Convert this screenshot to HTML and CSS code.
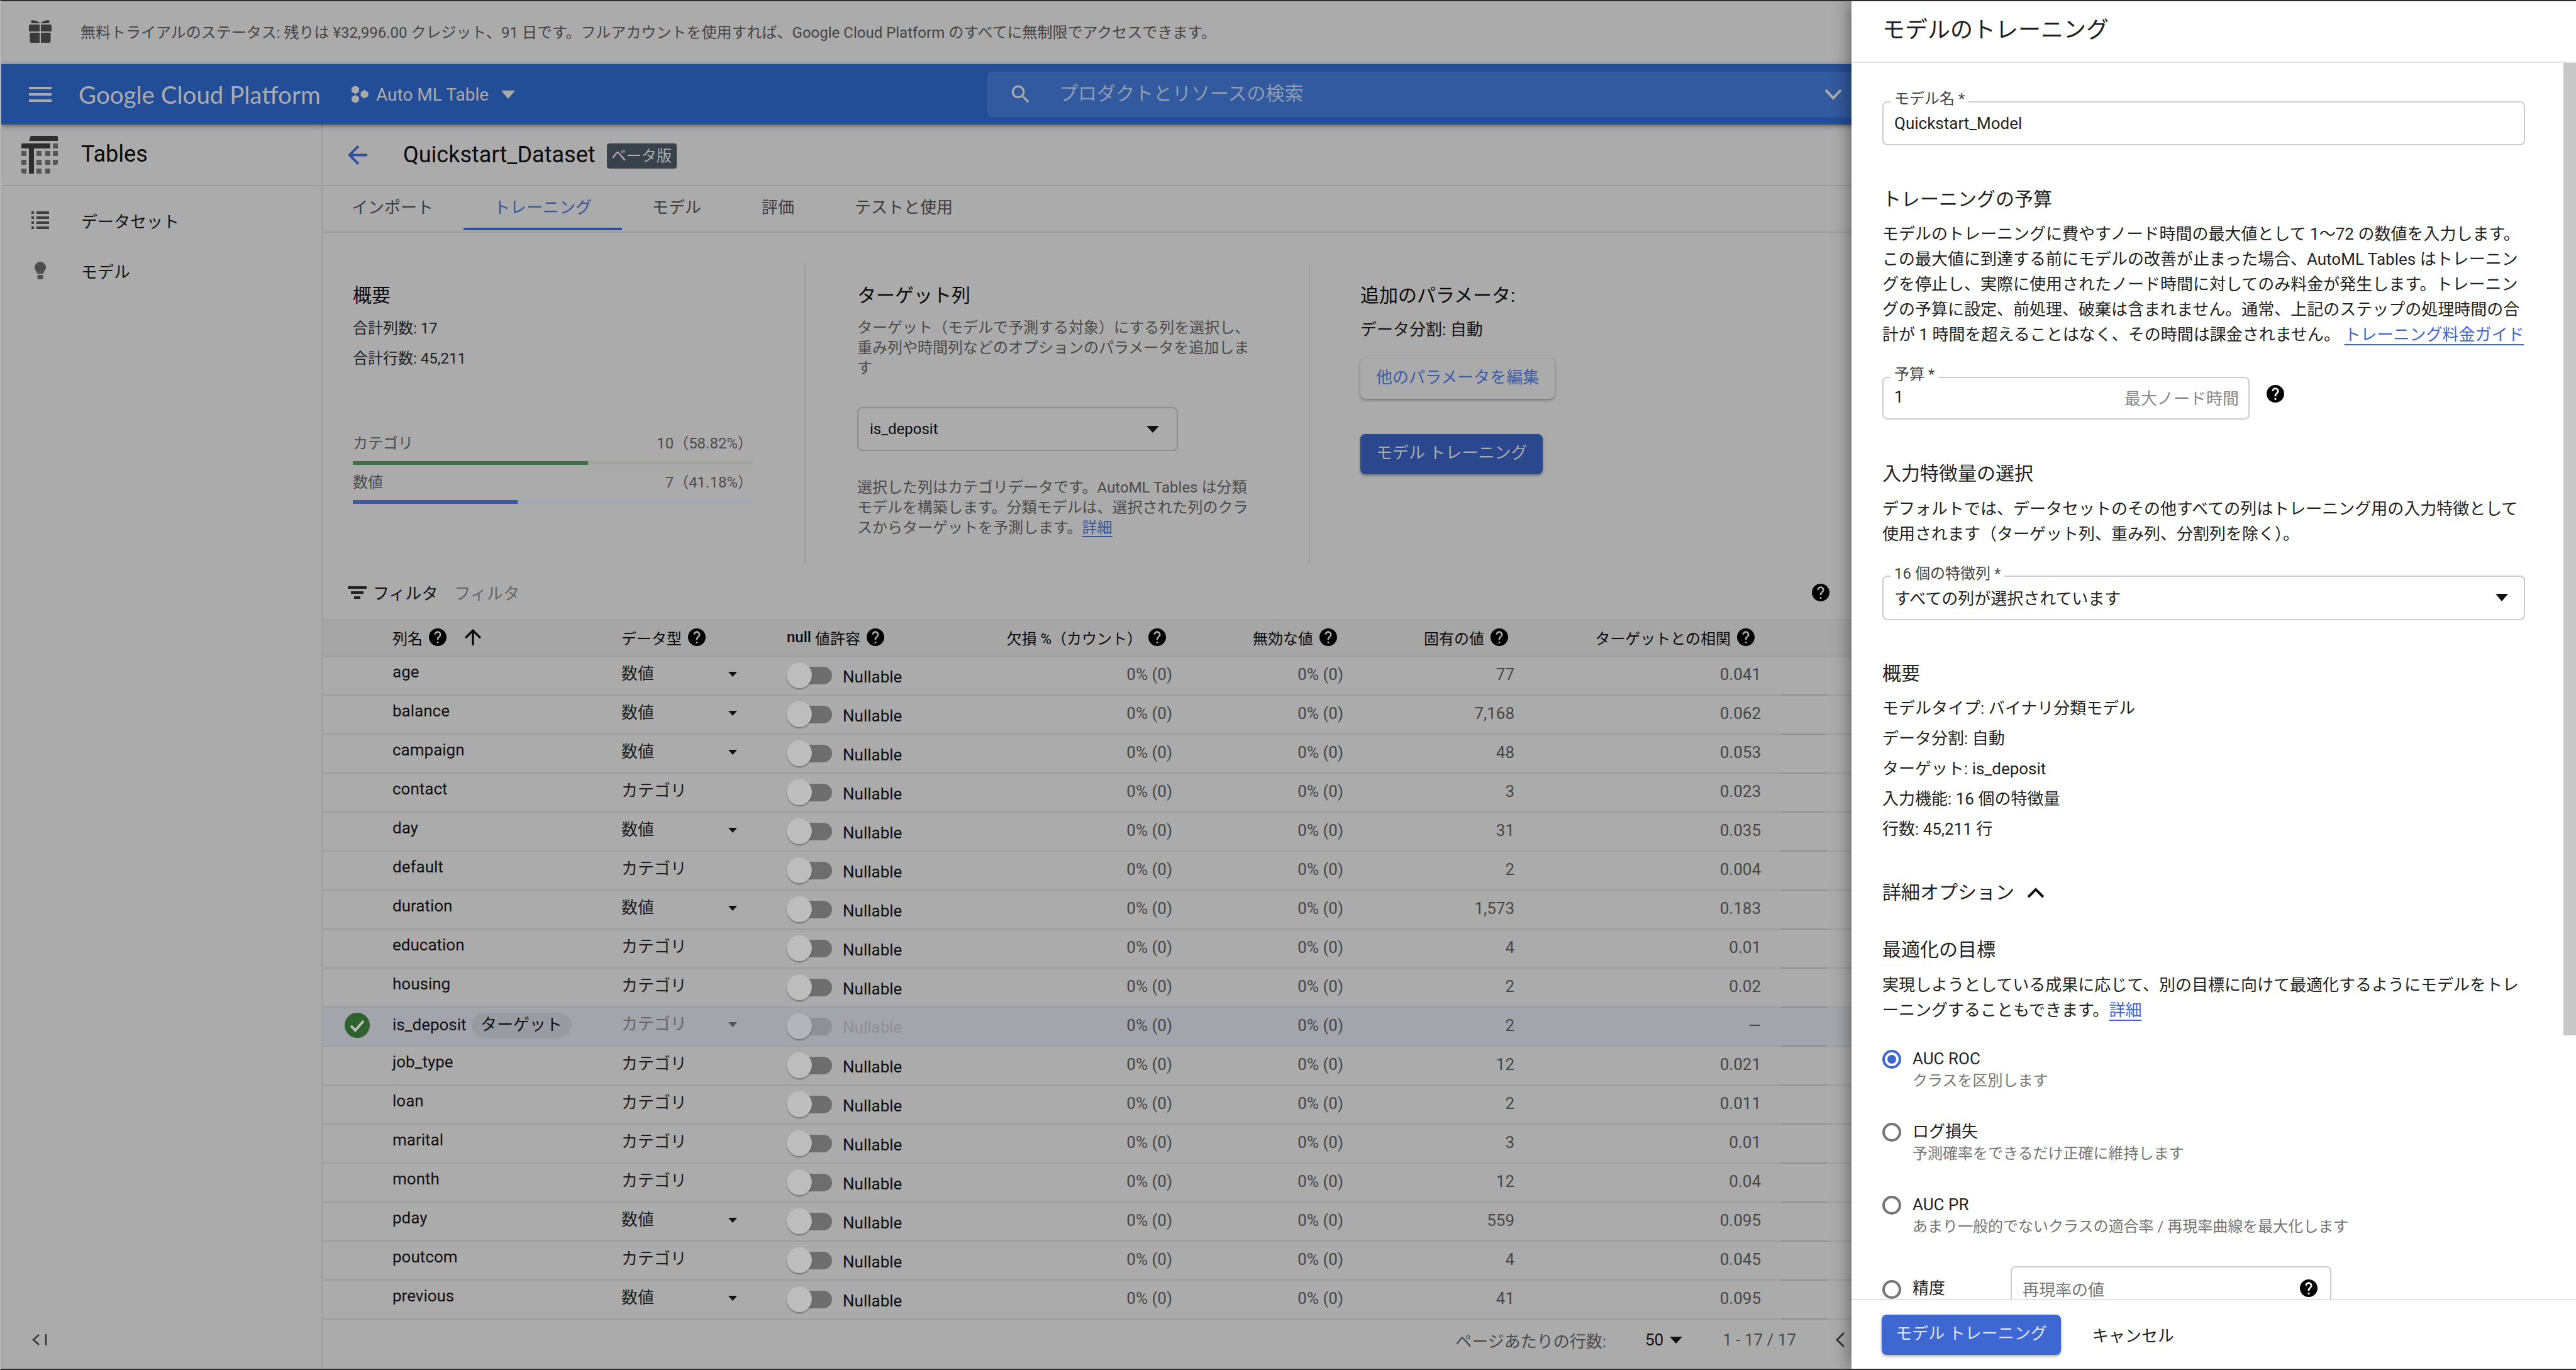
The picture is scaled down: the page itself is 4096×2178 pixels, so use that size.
FILE: index.html
```html
<!DOCTYPE html>
<html lang="ja">
<head>
<meta charset="utf-8">
<title>Google Cloud Platform - Tables</title>
<link rel="stylesheet" href="styles.css">
</head>
<body>
<svg class="defs" width="0" height="0">
  <symbol id="help" viewBox="2 2 20 20"><path d="M12 2C6.48 2 2 6.48 2 12s4.48 10 10 10 10-4.48 10-10S17.52 2 12 2zm1 17h-2v-2h2v2zm2.07-7.75l-.9.92C13.45 12.9 13 13.5 13 15h-2v-.5c0-1.1.45-2.1 1.17-2.83l1.24-1.26c.37-.36.59-.86.59-1.41 0-1.1-.9-2-2-2s-2 .9-2 2H8c0-2.21 1.79-4 4-4s4 1.79 4 4c0 .88-.36 1.68-.93 2.25z"/></symbol>
</svg>
<div class="app">
  <div class="trial">
    <svg class="gift" viewBox="0 0 36 36"><path d="M3 1.5C6 .2 11 .8 16.5 4.5c1 .7 2 .7 3 0C25 .8 30 .2 33 1.5c-.3 2.5-.8 3.5-3 4H6c-2.200-.5-2.700-1.500-3-4z" transform="translate(0 -.5)"/><path d="M2 7h15v11H0V9a2 2 0 0 1 2-2zM19 7h15a2 2 0 0 1 2 2v9H19zM1.500 20H17v16H4a2.500 2.500 0 0 1-2.500-2.500zM19 20h15.500v13.500A2.500 2.500 0 0 1 32 36H19z"/></svg>
    <span>無料トライアルのステータス: 残りは ¥32,996.00 クレジット、91 日です。フルアカウントを使用すれば、Google Cloud Platform のすべてに無制限でアクセスできます。</span>
  </div>
  <header class="topbar">
    <svg class="burger" viewBox="0 0 36 24"><path d="M0 0h36v4H0zM0 10h36v4H0zM0 20h36v4H0z"/></svg>
    <span class="logo">Google Cloud Platform</span>
    <div class="project">
      <svg class="hex" viewBox="0 0 27 28"><path d="M6 0l6 3.500v6.500l-6 3.500-6-3.500V3.500zM20.500 7l6 3.500v6.500l-6 3.500-6-3.500v-6.500zM6 15l6 3.500v6l-6 3.500-6-3.500v-6z"/></svg>
      <span>Auto ML Table</span>
      <i class="project-caret"></i>
    </div>
    <div class="search">
      <svg class="search-icon" viewBox="0 0 24 24"><path d="M15.500 14h-.79l-.28-.27C15.410 12.590 16 11.110 16 9.500 16 5.910 13.090 3 9.500 3S3 5.910 3 9.500 5.910 16 9.500 16c1.610 0 3.090-.59 4.230-1.570l.27.28v.79l5 4.990L20.490 19l-4.990-5zm-6 0C7.010 14 5 11.990 5 9.500S7.010 5 9.500 5 14 7.010 14 9.500 11.990 14 9.500 14z"/></svg>
      <span class="search-text">プロダクトとリソースの検索</span>
      <svg class="search-chevron" viewBox="0 0 28 18"><path d="M2 2l12 13L26 2" /></svg>
    </div>
  </header>
  <div class="body">
    <aside class="sidebar">
      <div class="side-head">
        <svg class="tables-icon" viewBox="0 0 58 60">
          <path class="t-dark" d="M14 2a2 2 0 0 1 2-2h40a2 2 0 0 1 2 2v6H12zM2 12h44v8H20v40h-8V20H0v-6a2 2 0 0 1 2-2z"/>
          <path class="t-mid" d="M50 12h8v8h-8zM0 24h8v8H0zM24 24h8v8h-8zM38 24h8v8h-8zM50 24h8v8h-8zM0 38h8v8H0zM24 38h8v8h-8zM38 38h8v8h-8zM50 38h8v6l-2 2h-6zM0 52h8v8H2l-2-2zM24 52h8v8h-8zM38 52h8v6l-2 2h-6z"/>
        </svg>
        <span>Tables</span>
      </div>
      <nav class="side-nav">
        <div class="side-item">
          <span class="side-ico"><svg class="list-icon" viewBox="0 0 28 28"><path d="M0 0h4v4H0zM8 0h20v4H8zM0 8h4v4H0zM8 8h20v4H8zM0 16h4v4H0zM8 16h20v4H8zM0 24h4v4H0zM8 24h20v4H8z"/></svg></span>
          <span>データセット</span>
        </div>
        <div class="side-item">
          <span class="side-ico"><svg class="bulb-icon" viewBox="0 0 18 28"><path d="M9 0a9 9 0 0 1 9 9c0 3.300-1.500 5.300-3.500 7.300V19h-11v-2.700C1.500 14.300 0 12.300 0 9a9 9 0 0 1 9-9z"/><rect x="4.500" y="21" width="9" height="7" rx="2"/></svg></span>
          <span>モデル</span>
        </div>
      </nav>
      <svg class="collapse" viewBox="0 0 26 20"><path d="M12 2L3 10l9 8M23 1v18"/></svg>
    </aside>
    <main class="main">
      <div class="title-row">
        <svg class="back" viewBox="4 4 16 16"><path d="M20 11H7.830l5.590-5.590L12 4l-8 8 8 8 1.410-1.410L7.830 13H20v-2z"/></svg>
        <h1>Quickstart_Dataset</h1>
        <span class="badge">ベータ版</span>
      </div>
      <div class="tabs">
        <span class="tab">インポート</span>
        <span class="tab active">トレーニング</span>
        <span class="tab">モデル</span>
        <span class="tab">評価</span>
        <span class="tab">テストと使用</span>
      </div>
      <section class="summary">
        <div class="col col-a">
          <h3 class="col-title">概要</h3>
          <p class="meta first">合計列数: 17</p>
          <p class="meta">合計行数: 45,211</p>
          <div class="stat stat-first"><span>カテゴリ</span><span>10（58.82%）</span></div>
          <div class="bar bar-green"><div class="fill" style="width:58.82%"></div></div>
          <div class="stat"><span>数値</span><span>7（41.18%）</span></div>
          <div class="bar bar-blue"><div class="fill" style="width:41.18%"></div></div>
        </div>
        <div class="col col-b">
          <h3 class="col-title">ターゲット列</h3>
          <p class="note note-top">ターゲット（モデルで予測する対象）にする列を選択し、<br>重み列や時間列などのオプションのパラメータを追加しま<br>す</p>
          <div class="target-select"><span>is_deposit</span><i class="caret caret-big"></i></div>
          <p class="note note-bottom">選択した列はカテゴリデータです。AutoML Tables は分類<br>モデルを構築します。分類モデルは、選択された列のクラ<br>スからターゲットを予測します。<a class="dim-link">詳細</a></p>
        </div>
        <div class="col col-c">
          <h3 class="col-title">追加のパラメータ:</h3>
          <p class="split">データ分割: 自動</p>
          <div class="btn-ghost">他のパラメータを編集</div>
          <div class="btn-solid">モデル トレーニング</div>
        </div>
      </section>
      <div class="filter">
        <svg class="filter-icon" viewBox="0 0 30 20"><path d="M0 0h30v4H0zM5 8h20v4H5zM10 16h10v4H10z"/></svg>
        <span class="filter-label">フィルタ</span>
        <span class="filter-hint">フィルタ</span>
        <svg class="help filter-help"><use href="#help"/></svg>
      </div>
      <div class="table">
        <div class="row head">
          <div></div>
          <div class="h-left">列名<svg class="help"><use href="#help"/></svg><svg class="sort" viewBox="4 4 16 16"><path d="M4 12l1.410 1.410L11 7.830V20h2V7.830l5.580 5.590L20 12l-8-8-8 8z"/></svg></div>
          <div class="h-left">データ型<svg class="help"><use href="#help"/></svg></div>
          <div class="h-left"><span class="h-null">null</span>&nbsp;値許容<svg class="help"><use href="#help"/></svg></div>
          <div class="h-right">欠損 %（カウント）<svg class="help"><use href="#help"/></svg></div>
          <div class="h-right">無効な値<svg class="help"><use href="#help"/></svg></div>
          <div class="h-right">固有の値<svg class="help"><use href="#help"/></svg></div>
          <div class="h-right">ターゲットとの相関<svg class="help"><use href="#help"/></svg></div>
          <div></div>
        </div>
        <div class="row"><div></div><div class="name">age</div><div class="type"><span>数値</span><i class="caret"></i></div><div class="nullable"><span class="toggle"><i></i></span><span>Nullable</span></div><div class="num">0% (0)</div><div class="num">0% (0)</div><div class="num">77</div><div class="num">0.041</div><div class="end"><i></i></div></div>
        <div class="row"><div></div><div class="name">balance</div><div class="type"><span>数値</span><i class="caret"></i></div><div class="nullable"><span class="toggle"><i></i></span><span>Nullable</span></div><div class="num">0% (0)</div><div class="num">0% (0)</div><div class="num">7,168</div><div class="num">0.062</div><div class="end"><i></i></div></div>
        <div class="row"><div></div><div class="name">campaign</div><div class="type"><span>数値</span><i class="caret"></i></div><div class="nullable"><span class="toggle"><i></i></span><span>Nullable</span></div><div class="num">0% (0)</div><div class="num">0% (0)</div><div class="num">48</div><div class="num">0.053</div><div class="end"><i></i></div></div>
        <div class="row"><div></div><div class="name">contact</div><div class="type"><span>カテゴリ</span></div><div class="nullable"><span class="toggle"><i></i></span><span>Nullable</span></div><div class="num">0% (0)</div><div class="num">0% (0)</div><div class="num">3</div><div class="num">0.023</div><div class="end"><i></i></div></div>
        <div class="row"><div></div><div class="name">day</div><div class="type"><span>数値</span><i class="caret"></i></div><div class="nullable"><span class="toggle"><i></i></span><span>Nullable</span></div><div class="num">0% (0)</div><div class="num">0% (0)</div><div class="num">31</div><div class="num">0.035</div><div class="end"><i></i></div></div>
        <div class="row"><div></div><div class="name">default</div><div class="type"><span>カテゴリ</span></div><div class="nullable"><span class="toggle"><i></i></span><span>Nullable</span></div><div class="num">0% (0)</div><div class="num">0% (0)</div><div class="num">2</div><div class="num">0.004</div><div class="end"><i></i></div></div>
        <div class="row"><div></div><div class="name">duration</div><div class="type"><span>数値</span><i class="caret"></i></div><div class="nullable"><span class="toggle"><i></i></span><span>Nullable</span></div><div class="num">0% (0)</div><div class="num">0% (0)</div><div class="num">1,573</div><div class="num">0.183</div><div class="end"><i></i></div></div>
        <div class="row"><div></div><div class="name">education</div><div class="type"><span>カテゴリ</span></div><div class="nullable"><span class="toggle"><i></i></span><span>Nullable</span></div><div class="num">0% (0)</div><div class="num">0% (0)</div><div class="num">4</div><div class="num">0.01</div><div class="end"><i></i></div></div>
        <div class="row"><div></div><div class="name">housing</div><div class="type"><span>カテゴリ</span></div><div class="nullable"><span class="toggle"><i></i></span><span>Nullable</span></div><div class="num">0% (0)</div><div class="num">0% (0)</div><div class="num">2</div><div class="num">0.02</div><div class="end"><i></i></div></div>
        <div class="row target">
          <div class="check-cell"><svg class="check" viewBox="0 0 40 40"><circle cx="20" cy="20" r="20"/><path d="M10 21l7 7 13-15"/></svg></div>
          <div class="name"><span>is_deposit</span><span class="pill">ターゲット</span></div>
          <div class="type"><span>カテゴリ</span><i class="caret"></i></div>
          <div class="nullable"><span class="toggle"><i></i></span><span>Nullable</span></div>
          <div class="num">0% (0)</div><div class="num">0% (0)</div><div class="num">2</div><div class="num">—</div><div class="end"><i></i></div>
        </div>
        <div class="row"><div></div><div class="name">job_type</div><div class="type"><span>カテゴリ</span></div><div class="nullable"><span class="toggle"><i></i></span><span>Nullable</span></div><div class="num">0% (0)</div><div class="num">0% (0)</div><div class="num">12</div><div class="num">0.021</div><div class="end"><i></i></div></div>
        <div class="row"><div></div><div class="name">loan</div><div class="type"><span>カテゴリ</span></div><div class="nullable"><span class="toggle"><i></i></span><span>Nullable</span></div><div class="num">0% (0)</div><div class="num">0% (0)</div><div class="num">2</div><div class="num">0.011</div><div class="end"><i></i></div></div>
        <div class="row"><div></div><div class="name">marital</div><div class="type"><span>カテゴリ</span></div><div class="nullable"><span class="toggle"><i></i></span><span>Nullable</span></div><div class="num">0% (0)</div><div class="num">0% (0)</div><div class="num">3</div><div class="num">0.01</div><div class="end"><i></i></div></div>
        <div class="row"><div></div><div class="name">month</div><div class="type"><span>カテゴリ</span></div><div class="nullable"><span class="toggle"><i></i></span><span>Nullable</span></div><div class="num">0% (0)</div><div class="num">0% (0)</div><div class="num">12</div><div class="num">0.04</div><div class="end"><i></i></div></div>
        <div class="row"><div></div><div class="name">pday</div><div class="type"><span>数値</span><i class="caret"></i></div><div class="nullable"><span class="toggle"><i></i></span><span>Nullable</span></div><div class="num">0% (0)</div><div class="num">0% (0)</div><div class="num">559</div><div class="num">0.095</div><div class="end"><i></i></div></div>
        <div class="row"><div></div><div class="name">poutcom</div><div class="type"><span>カテゴリ</span></div><div class="nullable"><span class="toggle"><i></i></span><span>Nullable</span></div><div class="num">0% (0)</div><div class="num">0% (0)</div><div class="num">4</div><div class="num">0.045</div><div class="end"><i></i></div></div>
        <div class="row"><div></div><div class="name">previous</div><div class="type"><span>数値</span><i class="caret"></i></div><div class="nullable"><span class="toggle"><i></i></span><span>Nullable</span></div><div class="num">0% (0)</div><div class="num">0% (0)</div><div class="num">41</div><div class="num">0.095</div><div class="end"><i></i></div></div>
      </div>
      <div class="pager">
        <span class="pager-label">ページあたりの行数:</span>
        <span class="pager-size">50</span><i class="caret caret-big pager-caret"></i>
        <span class="pager-range">1 - 17 / 17</span>
        <svg class="pager-prev" viewBox="0 0 18 26"><path d="M15 2L4 13l11 11"/></svg>
      </div>
    </main>
  </div>
  <aside class="drawer">
    <div class="drawer-head">モデルのトレーニング</div>
    <div class="drawer-body">
      <div class="drawer-scroll">
        <div class="field field-name">
          <label>モデル名 *</label>
          <span>Quickstart_Model</span>
        </div>
        <h3 class="sec s-budget">トレーニングの予算</h3>
        <p class="para p-budget">モデルのトレーニングに費やすノード時間の最大値として 1〜72 の数値を入力します。<br>この最大値に到達する前にモデルの改善が止まった場合、AutoML Tables はトレーニン<br>グを停止し、実際に使用されたノード時間に対してのみ料金が発生します。トレーニン<br>グの予算に設定、前処理、破棄は含まれません。通常、上記のステップの処理時間の合<br>計が 1 時間を超えることはなく、その時間は課金されません。 <a class="link">トレーニング料金ガイド</a></p>
        <div class="budget-row">
          <div class="field field-budget">
            <label>予算 *</label>
            <span>1</span>
            <span class="suffix">最大ノード時間</span>
          </div>
          <svg class="help"><use href="#help"/></svg>
        </div>
        <h3 class="sec s-input">入力特徴量の選択</h3>
        <p class="para">デフォルトでは、データセットのその他すべての列はトレーニング用の入力特徴として<br>使用されます（ターゲット列、重み列、分割列を除く）。</p>
        <div class="field field-select">
          <label>16 個の特徴列 *</label>
          <span>すべての列が選択されています</span>
          <i class="caret caret-select"></i>
        </div>
        <h3 class="sec s-over">概要</h3>
        <ul class="facts">
          <li>モデルタイプ: バイナリ分類モデル</li>
          <li>データ分割: 自動</li>
          <li>ターゲット: is_deposit</li>
          <li>入力機能: 16 個の特徴量</li>
          <li>行数: 45,211 行</li>
        </ul>
        <h3 class="sec s-adv">詳細オプション<svg class="up" viewBox="0 0 28 18"><path d="M2 16L14 4l12 12"/></svg></h3>
        <h3 class="sec s-goal">最適化の目標</h3>
        <p class="para">実現しようとしている成果に応じて、別の目標に向けて最適化するようにモデルをトレ<br>ーニングすることもできます。<a class="link">詳細</a></p>
        <div class="radio-item r-first">
          <i class="radio on"></i>
          <div><div class="r-label">AUC ROC</div><div class="r-sub">クラスを区別します</div></div>
        </div>
        <div class="radio-item">
          <i class="radio"></i>
          <div><div class="r-label">ログ損失</div><div class="r-sub">予測確率をできるだけ正確に維持します</div></div>
        </div>
        <div class="radio-item">
          <i class="radio"></i>
          <div><div class="r-label">AUC PR</div><div class="r-sub">あまり一般的でないクラスの適合率 / 再現率曲線を最大化します</div></div>
        </div>
        <div class="precision">
          <i class="radio"></i>
          <div class="r-label p-label">精度</div>
          <div class="field field-recall">
            <span class="hint">再現率の値</span>
            <svg class="help"><use href="#help"/></svg>
          </div>
        </div>
      </div>
      <div class="scrollbar"><div class="thumb"></div></div>
    </div>
    <div class="drawer-foot">
      <div class="btn-primary">モデル トレーニング</div>
      <span class="cancel">キャンセル</span>
    </div>
  </aside>
</div>
</body>
</html>
```
FILE: styles.css
```css
* { box-sizing: border-box; }
html, body { margin: 0; padding: 0; }
body { font-family: Roboto, "Noto Sans CJK JP", sans-serif; font-size: 26px; color: #111; background: #ababab; }
h1, h3, p, ul { margin: 0; padding: 0; font-weight: 400; }
i { display: block; font-style: normal; }
.defs { position: absolute; }

.app { position: relative; width: 4096px; height: 2178px; overflow: hidden; display: flex; flex-direction: column; background: #ababab; border-top: 2px solid #2c2c2c; border-bottom: 2px solid #2c2c2c; border-left: 2px solid #b6b6b6; }

.trial { height: 100px; flex: none; display: flex; align-items: center; padding: 0 0 4px 44px; color: #444; font-size: 24px; }
.trial span { margin-left: 46px; margin-top: -2px; white-space: nowrap; }
.gift { width: 36px; height: 36px; fill: #3a3a3a; flex: none; }

.topbar { position: relative; z-index: 2; height: 96px; flex: none; display: flex; align-items: center; padding-left: 44px; background: #244d97; box-shadow: 0 2px 8px rgba(0,0,0,.45); color: #ababab; }
.burger { width: 36px; height: 24px; fill: #ababab; flex: none; }
.logo { margin-left: 43px; font-family: Lato, Roboto, sans-serif; font-size: 38.5px; white-space: nowrap; flex: none; width: 386px; }
.project { display: flex; align-items: center; margin-left: 48px; font-size: 28px; flex: none; }
.hex { width: 27px; height: 28px; fill: #ababab; margin-right: 12px; }
.project-caret { margin-left: 20px; width: 0; height: 0; border-left: 11.500px solid transparent; border-right: 11.500px solid transparent; border-top: 13px solid #ababab; }
.search { margin-left: auto; margin-right: 1126px; width: 1400px; height: 72px; background: #335a9e; border-radius: 8px; display: flex; align-items: center; padding-left: 34px; flex: none; }
.search-icon { width: 38px; height: 38px; fill: #ababab; flex: none; }
.search-text { margin-left: 42px; font-size: 30px; color: #8f9cb4; margin-top: -8px; white-space: nowrap; }
.search-chevron { width: 28px; height: 18px; margin-left: auto; margin-right: 41px; fill: none; stroke: #ababab; stroke-width: 4; }

.body { flex: 1; min-height: 0; display: flex; }
.sidebar { width: 511px; flex: none; border-right: 2px solid #9f9f9f; display: flex; flex-direction: column; }
.side-head { height: 98px; flex: none; border-bottom: 2px solid #9c9c9c; display: flex; align-items: center; padding-left: 32px; font-size: 36px; color: #0a0a0a; }
.side-head span { margin-left: 37px; margin-top: -2px; }
.tables-icon { width: 58px; height: 60px; flex: none; }
.t-dark { fill: #2e2e2e; }
.t-mid { fill: #555; }
.side-nav { padding-top: 14px; }
.side-item { height: 80px; display: flex; align-items: center; color: #141414; }
.side-ico { width: 124px; margin-right: 3px; flex: none; display: flex; justify-content: center; }
.list-icon { width: 28px; height: 28px; flex: none; fill: #3f3f3f; }
.bulb-icon { width: 18px; height: 28px; flex: none; fill: #4f4f4f; }
.collapse { width: 26px; height: 20px; margin-top: auto; margin-left: 48px; margin-bottom: 36px; fill: none; stroke: #333; stroke-width: 2.500; flex: none; }

.main { width: 2431px; flex: none; display: flex; flex-direction: column; min-height: 0; }
.title-row { height: 98px; flex: none; border-bottom: 2px solid #9c9c9c; display: flex; align-items: center; padding: 0 0 0 40px; }
.back { width: 31px; height: 31px; fill: #2f50a0; flex: none; }
.title-row h1 { margin-left: 57px; font-size: 36px; color: #0a0a0a; white-space: nowrap; }
.badge { margin-left: 18px; margin-top: 4px; width: 111px; height: 40px; line-height: 40px; text-align: center; background: #39424a; color: #a9adaf; font-size: 24px; border-radius: 4px; white-space: nowrap; }

.tabs { height: 74px; flex: none; display: flex; border-bottom: 2px solid #9c9c9c; color: #3c3c3c; margin-left: -2px; padding-left: 0; }
.tab { padding: 16px 48px 0; height: 70px; line-height: 36px; white-space: nowrap; }
.tab.active { color: #35559f; border-bottom: 4px solid #2f50a0; }

.summary { height: 478px; flex: none; margin-top: 48px; display: flex; }
.col { padding-top: 32px; flex: none; }
.col-a { width: 768px; padding-left: 48px; border-right: 2px solid #9f9f9f; }
.col-b { width: 802px; padding-left: 82px; border-right: 2px solid #9f9f9f; }
.col-c { padding-left: 80px; }
.col-title { font-size: 30px; line-height: 40px; color: #0a0a0a; }
.meta { font-size: 24px; line-height: 48px; color: #222; }
.meta.first { margin-top: 8px; }
.stat { width: 636px; display: flex; justify-content: space-between; font-size: 24px; line-height: 36px; color: #4c4c4c; margin-top: 10px; }
.stat-first { margin-top: 93px; }
.bar { width: 636px; height: 6px; margin-top: 10px; }
.bar-green { background: #a0a69f; }
.bar-green .fill { background: #3d7341; height: 100%; }
.bar-blue { background: #a3a7b3; }
.bar-blue .fill { background: #3a5aa8; height: 100%; }
.note { font-size: 24px; line-height: 32px; color: #4a4a4a; white-space: nowrap; }
.note-top { margin-top: 15px; }
.note-bottom { margin-top: 42px; }
.dim-link { color: #35559f; text-decoration: underline; text-decoration-thickness: 2px; text-underline-offset: 5px; }
.target-select { margin-top: 46px; width: 510px; height: 70px; border: 2px solid #8e8e8e; border-radius: 8px; padding: 0 28px 0 18px; display: flex; align-items: center; justify-content: space-between; font-size: 24px; color: #0a0a0a; }
.split { margin-top: 14px; line-height: 40px; color: #111; white-space: nowrap; }
.btn-ghost, .btn-solid { height: 64px; line-height: 60px; border-radius: 8px; white-space: nowrap; width: fit-content; box-shadow: 0 2px 4px rgba(0,0,0,.35); }
.btn-ghost { margin-top: 26px; padding: 0 25px; color: #3a5ca8; background: #ababab; }
.btn-solid { margin-top: 56px; padding: 0 25px; color: #ababab; background: #2b478d; }

.caret { width: 0; height: 0; border-left: 7.500px solid transparent; border-right: 7.500px solid transparent; border-top: 8px solid #111; }
.caret-big { border-left-width: 10px; border-right-width: 10px; border-top-width: 11px; }

.filter { height: 88px; flex: none; display: flex; align-items: center; padding: 3px 35px 0 40px; }
.filter-icon { width: 30px; height: 20px; fill: #222; flex: none; }
.filter-label { margin-left: 10px; color: #111; }
.filter-hint { margin-left: 26px; color: #666; }
.filter-help { margin-left: auto; }
.help { width: 28px; height: 28px; fill: #000; flex: none; display: block; }

.table { flex: none; }
.row { display: grid; grid-template-columns: 111px 364px 263px 349px 264px 272px 272px 392px 1fr; height: 62px; border-bottom: 2px solid #9d9d9d; }
.row.head { height: 60px; background: #a6a6a6; border-top: 2px solid #9d9d9d; font-size: 24px; color: #0a0a0a; padding-bottom: 2px; }
.h-left, .h-right { display: flex; align-items: center; white-space: nowrap; }
.h-left .help, .h-right .help { margin-left: 10px; }
.h-right { justify-content: flex-end; padding-right: 10px; }
.h-null { font-weight: 500; }
.sort { width: 26px; height: 26px; margin-left: 29px; flex: none; fill: #000; }
.name { padding-top: 6px; line-height: 36px; display: flex; align-items: flex-start; color: #111; }
.type { padding-top: 9px; line-height: 36px; width: 184px; display: flex; justify-content: space-between; color: #1c1c1c; }
.type .caret { margin-top: 15px; }
.nullable { display: flex; align-items: flex-start; line-height: 36px; color: #0f0f0f; }
.nullable span:last-child { margin-left: 17px; padding-top: 14px; }
.toggle { position: relative; width: 72px; height: 60px; flex: none; display: block; }
.toggle::before { content: ""; position: absolute; left: 4px; right: 0; top: 16px; height: 28px; background: #6e6e6e; border-radius: 14px; }
.toggle i { position: absolute; left: 0; top: 9px; width: 40px; height: 41px; border-radius: 50%; background: #bdbdbd; box-shadow: 0 2px 2px rgba(0,0,0,.3); }
.num { padding-top: 10px; line-height: 36px; text-align: right; color: #474747; }
.end { position: relative; }
.end i { position: absolute; left: 32px; width: 72px; bottom: -2px; height: 2px; background: #8f8f8f; }

.row.target { background: #a4a5ac; }
.check-cell { display: flex; justify-content: flex-start; padding: 8px 0 0 35px; }
.check { width: 40px; height: 40px; }
.check circle { fill: #2d612e; }
.check path { fill: none; stroke: #bcbcbc; stroke-width: 4; }
.target .name { padding-top: 9px; }
.pill { margin: -1px 0 0 8px; height: 40px; line-height: 38px; width: 159px; text-align: center; background: #999ba3; border-radius: 20px; color: #111; }
.target .type { padding-top: 8px; color: #666; }
.target .type .caret { border-top-color: #555; }
.target .nullable { color: #8f8f94; }
.target .toggle::before { background: #8f9096; }
.target .toggle i { background: #b4b5ba; }
.target .nullable span:last-child { padding-top: 13px; }

.pager { flex: 1; display: flex; align-items: center; padding: 0 9px 14px 0; justify-content: flex-end; font-size: 26px; color: #4a4a4a; white-space: nowrap; }
.pager-size { margin-left: 62px; color: #111; }
.pager-caret { margin-left: 10px; border-top-color: #111; }
.pager-range { margin-left: 64px; }
.pager-prev { width: 18px; height: 26px; margin-left: 61px; fill: none; stroke: #333; stroke-width: 3; flex: none; }

.drawer { position: absolute; top: 0; bottom: 0; right: 0; width: 1152px; background: #fff; z-index: 5; display: flex; flex-direction: column; box-shadow: -4px 0 24px rgba(0,0,0,.4); color: #222; }
.drawer-head { height: 98px; flex: none; border-bottom: 2px solid #e2e2e2; padding-left: 49px; font-size: 36px; line-height: 93px; color: #1e1e1e; }
.drawer-body { flex: 1; min-height: 0; display: flex; }
.drawer-scroll { flex: 1; min-width: 0; padding: 61px 61px 0 49px; overflow: hidden; }
.scrollbar { width: 20px; flex: none; }
.thumb { height: 1546px; background: #c8c8c8; }

.field { position: relative; border: 2px solid #ccc; border-radius: 8px; display: flex; align-items: center; padding: 0 15px 0 17px; white-space: nowrap; color: #222; }
.field label { position: absolute; left: 11px; top: -21px; padding: 0 6px; line-height: 30px; background: #fff; font-size: 24px; color: #444; }
.field-name { height: 70px; }
.sec { font-size: 30px; line-height: 40px; color: #222; white-space: nowrap; }
.para { margin-top: 16px; line-height: 40px; white-space: nowrap; }
.link { color: #3f67d1; text-decoration: underline; text-decoration-thickness: 2px; text-underline-offset: 6px; }
.s-budget { margin-top: 66px; }
.p-budget { margin-top: 15px; }
.budget-row { margin-top: 47px; display: flex; align-items: center; }
.budget-row > .help { margin: -14px 0 0 27px; }
.field-budget { width: 584px; height: 68px; justify-content: space-between; padding-bottom: 4px; }
.suffix { color: #888; }
.s-input { margin-top: 66px; }
.field-select { margin-top: 46px; height: 71px; padding-right: 25px; padding-bottom: 2px; justify-content: space-between; }
.field-select label { top: -20px; }
.caret-select { border-left-width: 10.500px; border-right-width: 10.500px; border-top-width: 12px; }
.s-over { margin-top: 65px; }
.facts { margin-top: 11px; list-style: none; line-height: 48px; }
.s-adv { margin-top: 57px; display: flex; align-items: center; }
.up { width: 28px; height: 18px; margin-left: 20px; fill: none; stroke: #111; stroke-width: 4; flex: none; }
.s-goal { margin-top: 51px; }
.radio-item { display: flex; align-items: flex-start; margin-bottom: 46px; }
.r-first { margin-top: 39px; }
.radio { position: relative; width: 30px; height: 30px; flex: none; border: 4px solid #757575; border-radius: 50%; margin: 4px 18px 0 0; }
.radio.on { border-color: #3f67d1; }
.radio.on::after { content: ""; position: absolute; left: 4px; top: 4px; width: 14px; height: 14px; border-radius: 50%; background: #3f67d1; }
.r-label { line-height: 36px; color: #222; }
.r-sub { font-size: 24px; line-height: 34px; color: #757575; white-space: nowrap; }
.precision { display: flex; align-items: center; margin-top: 2px; }
.precision .radio { margin-top: 4px; }
.p-label { width: 156px; }
.field-recall { width: 510px; height: 70px; justify-content: space-between; padding-right: 20px; }
.hint { color: #777; }
.drawer-foot { height: 111px; flex: none; border-top: 2px solid #e2e2e2; display: flex; align-items: center; padding-left: 48px; }
.btn-primary { width: 285px; height: 64px; line-height: 60px; text-align: center; background: #3f67d1; color: #dfe6f8; border-radius: 8px; box-shadow: 0 2px 5px rgba(0,0,0,.35); white-space: nowrap; }
.cancel { margin-left: 50px; color: #222; }
```
